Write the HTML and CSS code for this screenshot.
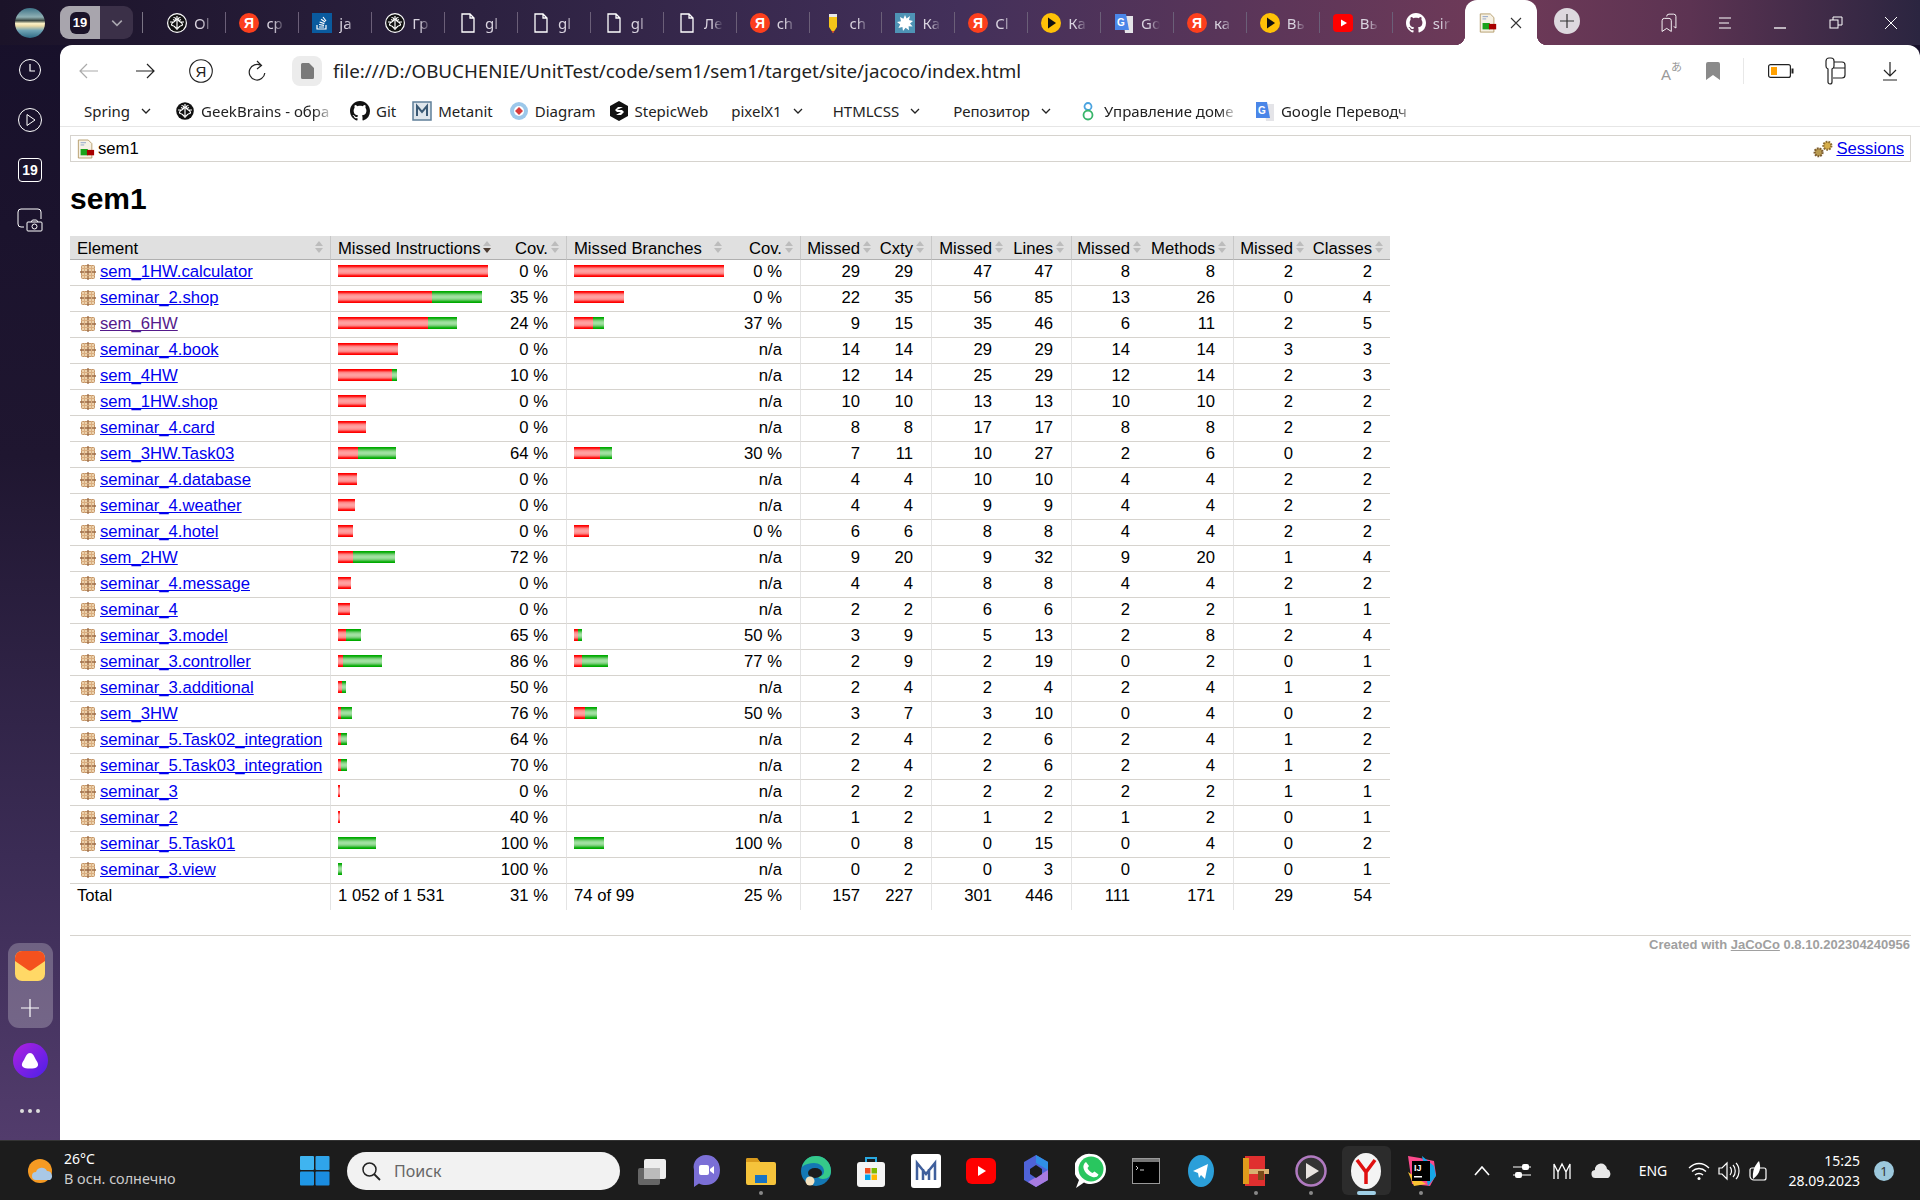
FILE: index.html
```html
<!DOCTYPE html>
<html lang="en">
<head>
  <meta charset="UTF-8" />
  <title>sem1</title>
  <link rel="stylesheet" href="styles.css">
</head>
<body>

  <!-- shared icons -->
  <svg class="defs" width="0" height="0">
    <symbol id="i-brain" viewBox="0 0 20 20">
      <circle cx="10" cy="10" r="10" fill="#fff"/>
      <circle cx="10" cy="10" r="8.8" fill="#111"/>
      <path d="M10 3v14M6.500 4.500c3 0 3 3 1 4s-3 1.500-3 3 2 1 3 2 1 2 2.500 2M13.500 4.500c-3 0-3 3-1 4s3 1.500 3 3-2 1-3 2-1 2-2.500 2M3 9h3.500M13.500 9H17M6 6.500l2 1M14 6.500l-2 1" fill="none" stroke="#fff" stroke-width="1.200"/>
    </symbol>
    <symbol id="i-ya" viewBox="0 0 20 20">
      <circle cx="10" cy="10" r="10" fill="#fc3f1d"/>
      <text x="10" y="15" text-anchor="middle" font-family="Liberation Sans" font-size="14" font-weight="bold" fill="#fff">Я</text>
    </symbol>
    <symbol id="i-so" viewBox="0 0 20 20">
      <rect width="20" height="20" fill="#0a5a9e"/>
      <path d="M5 12v4h9v-4M7 14h5M7 11.500l5 .8M7.600 9l4.800 1.600M9 6.300l4.200 2.800M11 4l3 4" fill="none" stroke="#fff" stroke-width="1.200"/>
    </symbol>
    <symbol id="i-doc" viewBox="0 0 20 20">
      <path d="M4 1h8l4 4v14H4z M12 1v4h4" fill="none" stroke="#fff" stroke-width="1.300"/>
    </symbol>
    <symbol id="i-pencil" viewBox="0 0 20 20">
      <path d="M6 4h8v10l-4 6-4-6z" fill="#f5c518"/>
      <path d="M6 1h8v3H6z" fill="#e8e8e8"/>
      <path d="M8.700 18h2.600L10 20z" fill="#d33"/>
    </symbol>
    <symbol id="i-splat" viewBox="0 0 20 20">
      <rect width="20" height="20" fill="#4e93b5"/>
      <path d="M10 2l1.600 3.400L15 3l-1 4 4 1-3 2.600 2.600 3-4-.4.4 4-3.400-2.400L8 18l-.6-4-4 1 1.800-3.600L2 9l4-.8L5 4l3.400 1.800z" fill="#fff"/>
    </symbol>
    <symbol id="i-kino" viewBox="0 0 20 20">
      <circle cx="10" cy="10" r="10" fill="#ffc107"/>
      <path d="M7 4.500l8 5.500-8 5.500z" fill="#111"/>
    </symbol>
    <symbol id="i-tr" viewBox="0 0 20 20">
      <path d="M9 3h10v17H11z" fill="#e4e4e8"/>
      <path d="M1 1h11l3 16H1z" fill="#4a86e8"/>
      <text x="7" y="13" text-anchor="middle" font-family="Liberation Sans" font-size="10" font-weight="bold" fill="#fff">G</text>
    </symbol>
    <symbol id="i-yt" viewBox="0 0 20 20">
      <rect y="1" width="20" height="18" rx="4" fill="#f00"/>
      <path d="M8 6.500l6 3.500-6 3.500z" fill="#fff"/>
    </symbol>
    <symbol id="i-gh" viewBox="0 0 16 16">
      <path fill="currentColor" d="M8 0C3.58 0 0 3.58 0 8c0 3.54 2.29 6.53 5.47 7.59.4.07.55-.17.55-.38 0-.19-.01-.82-.01-1.49-2.01.37-2.53-.49-2.69-.94-.09-.23-.48-.94-.82-1.13-.28-.15-.68-.52-.01-.53.63-.01 1.08.58 1.23.82.72 1.21 1.87.87 2.33.66.07-.52.28-.87.51-1.07-1.78-.2-3.64-.89-3.64-3.95 0-.87.31-1.59.82-2.15-.08-.2-.36-1.02.08-2.12 0 0 .67-.21 2.2.82.64-.18 1.32-.27 2-.27.68 0 1.36.09 2 .27 1.53-1.04 2.2-.82 2.2-.82.44 1.1.16 1.92.08 2.12.51.56.82 1.27.82 2.15 0 3.07-1.87 3.75-3.65 3.95.29.25.54.73.54 1.48 0 1.07-.01 1.93-.01 2.2 0 .21.15.46.55.38A8.013 8.013 0 0016 8c0-4.42-3.58-8-8-8z"/>
    </symbol>
    <symbol id="i-report" viewBox="0 0 20 22">
      <path d="M1.500 1h11l4 4v16h-15z" fill="#f6f1e4" stroke="#b39a68"/>
      <path d="M4 4h6M4 6.500h4" stroke="#8aa0c8"/>
      <rect x="4" y="11" width="8" height="7" fill="#1aa31a"/>
      <rect x="11" y="12" width="8" height="6" fill="#a80000"/>
    </symbol>
    <symbol id="i-pkg" viewBox="0 0 16 16">
      <rect x="1.500" y="1.500" width="13" height="13" rx="1" fill="#edd2ac" stroke="#c39568"/>
      <path d="M8 0v16M0 8h16" stroke="#9c6b45" stroke-width="1.300"/>
      <path d="M4.500 1v14M11.500 1v14M1 4.500h14M1 11.500h14" stroke="#d9ad80"/>
    </symbol>
    <symbol id="i-chev" viewBox="0 0 10 6">
      <path d="M1 1l4 4 4-4" fill="none" stroke="currentColor" stroke-width="1.300"/>
    </symbol>
  </svg>

  <div class="window">
    <div class="desk">

      <aside class="side">
        <div class="avatar"></div>
        <svg class="side-ic" width="24" height="24" viewBox="0 0 24 24"><circle cx="12" cy="12" r="10.500" fill="none" stroke="#fff"/><path d="M12 6v7h5" fill="none" stroke="#fff" stroke-width="1.200"/></svg>
        <svg class="side-ic" width="24" height="24" viewBox="0 0 24 24"><circle cx="12" cy="12" r="11.500" fill="none" stroke="#fff"/><path d="M9 6.500l8 5.500-8 5.500z" fill="none" stroke="#fff"/></svg>
        <div class="side-num">19</div>
        <svg class="side-ic shot" width="26" height="24" viewBox="0 0 26 24"><path d="M7 19H4a3 3 0 0 1-3-3V4a3 3 0 0 1 3-3h17a3 3 0 0 1 3 3v7" fill="none" stroke="#fff"/><rect x="10" y="14" width="15" height="9" rx="1" fill="none" stroke="#fff"/><circle cx="17.500" cy="18.500" r="2.500" fill="none" stroke="#fff"/><path d="M14 14l1.500-2h4l1.500 2" fill="none" stroke="#fff"/></svg>
        <div class="side-fill"></div>
        <div class="side-panel">
          <svg width="30" height="30" viewBox="0 0 30 30">
            <rect width="30" height="30" rx="7" fill="#ffd866"/>
            <path d="M0 7a7 7 0 0 1 7-7h16a7 7 0 0 1 7 7v3L17 19a3.500 3.500 0 0 1-4 0L0 10z" fill="#f4511e"/>
          </svg>
          <svg class="panel-plus" width="20" height="20" viewBox="0 0 20 20"><path d="M10 1v18M1 10h18" stroke="#fff" stroke-width="1.200"/></svg>
        </div>
        <div class="alice"><svg width="20" height="18" viewBox="0 0 20 18"><path d="M10 1c3 0 4 3 6 7 2 3 3 5 1 7-2 2-12 2-14 0-2-2-1-4 1-7 2-4 3-7 6-7z" fill="#fff"/></svg></div>
        <div class="side-dots"><i></i><i></i><i></i></div>
      </aside>

      <div class="browser">
        <div class="tabbar">
          <div class="tab-group">
            <div class="group-num"><span>19</span></div>
            <div class="group-arrow"><svg width="12" height="8"><use href="#i-chev"/></svg></div>
          </div>
          <div class="tab-sep"></div>
          <div class="tab first"><svg class="fav"><use href="#i-brain"/></svg><span class="tab-label">Ol</span></div>
          <div class="tab"><svg class="fav"><use href="#i-ya"/></svg><span class="tab-label">cp</span></div>
          <div class="tab"><svg class="fav"><use href="#i-so"/></svg><span class="tab-label">ja</span></div>
          <div class="tab"><svg class="fav"><use href="#i-brain"/></svg><span class="tab-label">Гр</span></div>
          <div class="tab"><svg class="fav"><use href="#i-doc"/></svg><span class="tab-label">gl</span></div>
          <div class="tab"><svg class="fav"><use href="#i-doc"/></svg><span class="tab-label">gl</span></div>
          <div class="tab"><svg class="fav"><use href="#i-doc"/></svg><span class="tab-label">gl</span></div>
          <div class="tab"><svg class="fav"><use href="#i-doc"/></svg><span class="tab-label">Ле</span></div>
          <div class="tab"><svg class="fav"><use href="#i-ya"/></svg><span class="tab-label">ch</span></div>
          <div class="tab"><svg class="fav"><use href="#i-pencil"/></svg><span class="tab-label">ch</span></div>
          <div class="tab"><svg class="fav"><use href="#i-splat"/></svg><span class="tab-label">Ка</span></div>
          <div class="tab"><svg class="fav"><use href="#i-ya"/></svg><span class="tab-label">Cl</span></div>
          <div class="tab"><svg class="fav"><use href="#i-kino"/></svg><span class="tab-label">Ка</span></div>
          <div class="tab"><svg class="fav"><use href="#i-tr"/></svg><span class="tab-label">Go</span></div>
          <div class="tab"><svg class="fav"><use href="#i-ya"/></svg><span class="tab-label">ка</span></div>
          <div class="tab"><svg class="fav"><use href="#i-kino"/></svg><span class="tab-label">Вь</span></div>
          <div class="tab"><svg class="fav"><use href="#i-yt"/></svg><span class="tab-label">Вь</span></div>
          <div class="tab"><svg class="fav gh-white"><use href="#i-gh"/></svg><span class="tab-label">sir</span></div>
          <div class="tab active">
            <svg class="fav"><use href="#i-report"/></svg>
            <svg class="tab-close" width="12" height="12" viewBox="0 0 12 12"><path d="M1 1l10 10M11 1L1 11" stroke="#333" stroke-width="1.100"/></svg>
          </div>
          <div class="new-tab"><svg width="14" height="14" viewBox="0 0 14 14"><path d="M7 0v14M0 7h14" stroke="#333" stroke-width="1.200"/></svg></div>
          <div class="win-btns">
            <svg width="18" height="20" viewBox="0 0 22 26"><path d="M8 4.500a3 3 0 0 1 3-3h6a3 3 0 0 1 3 3v15l-3-2M2 10a3 3 0 0 1 3-3h6a3 3 0 0 1 3 3v14l-6-4-6 4z" fill="none" stroke="#fff" stroke-width="1.200"/></svg>
            <svg width="14" height="12" viewBox="0 0 14 12"><path d="M1 1h12M1 6h10M1 11h12" stroke="#fff"/></svg>
            <svg width="14" height="12" viewBox="0 0 14 12"><path d="M1 11h12" stroke="#fff" stroke-width="1.300"/></svg>
            <svg width="14" height="13" viewBox="0 0 14 13"><rect x="1" y="4" width="8" height="8" fill="none" stroke="#fff"/><path d="M4 4V1h9v8H9" fill="none" stroke="#fff"/></svg>
            <svg width="14" height="12" viewBox="0 0 14 12"><path d="M1 0l12 12M13 0L1 12" stroke="#fff"/></svg>
          </div>
        </div>

        <div class="page">
          <div class="toolbar">
            <div class="tb-btn"><svg width="20" height="16" viewBox="0 0 20 16"><path d="M19 8H1M8 1L1 8l7 7" fill="none" stroke="#aaa" stroke-width="1.200"/></svg></div>
            <div class="tb-btn"><svg width="20" height="16" viewBox="0 0 20 16"><path d="M1 8h18M12 1l7 7-7 7" fill="none" stroke="#222" stroke-width="1.200"/></svg></div>
            <div class="tb-btn"><svg width="24" height="24" viewBox="0 0 24 24"><circle cx="12" cy="12" r="11.300" fill="none" stroke="#222" stroke-width="1.100"/><text x="12" y="17.500" text-anchor="middle" font-family="Liberation Sans" font-size="15" fill="#222">Я</text></svg></div>
            <div class="tb-btn"><svg width="18" height="22" viewBox="0 0 18 22"><path d="M13 5.500A7.800 7.800 0 1 0 16.800 13M9 1l4.500 4.500L9 9" fill="none" stroke="#222" stroke-width="1.200"/></svg></div>
            <div class="url-ic"><svg width="13" height="16" viewBox="0 0 13 16"><path d="M0 1.500A1.500 1.500 0 0 1 1.500 0H8l5 5v9.500a1.500 1.500 0 0 1-1.500 1.500h-10A1.500 1.500 0 0 1 0 14.500z" fill="#7a7a7a"/></svg></div>
            <div class="url">file:///D:/OBUCHENIE/UnitTest/code/sem1/sem1/target/site/jacoco/index.html</div>
            <div class="tb-right">
              <svg width="24" height="24" viewBox="0 0 24 24"><text x="1" y="21" font-family="Liberation Sans" font-size="15" fill="#999">A</text><text x="11" y="12" font-family="Noto Sans CJK JP" font-size="11" fill="#999">あ</text></svg>
              <svg class="tb-mark" width="14" height="18" viewBox="0 0 14 18"><path d="M0 2a2 2 0 0 1 2-2h10a2 2 0 0 1 2 2v16l-7-5-7 5z" fill="#8a8a8a"/></svg>
              <div class="tb-sep"></div>
              <svg class="tb-batt" width="26" height="14" viewBox="0 0 26 14"><rect x=".6" y=".6" width="21.800" height="12.800" rx="2" fill="none" stroke="#222" stroke-width="1.200"/><rect x="3" y="3" width="6" height="8" fill="#ffa000"/><rect x="23.500" y="4.500" width="2" height="5" fill="#222"/></svg>
              <svg class="tb-card" width="24" height="28" viewBox="0 0 24 28"><path d="M7 1h2a3 3 0 0 1 3 3v5a3 3 0 0 1-2 3v13a2 2 0 0 1-4 0V12a3 3 0 0 1-2-3V4a3 3 0 0 1 3-3zM12 5h8a3 3 0 0 1 3 3v10a3 3 0 0 1-3 3h-9M12 11h11" fill="none" stroke="#222" stroke-width="1.200"/></svg>
              <svg class="tb-down" width="16" height="20" viewBox="0 0 16 20"><path d="M8 1v14M2 9l6 6 6-6M1 19h14" fill="none" stroke="#222" stroke-width="1.200"/></svg>
            </div>
          </div>

          <div class="bookmarks">
            <div class="bm folder first">Spring <svg class="chev"><use href="#i-chev"/></svg></div>
            <div class="bm gb"><svg class="fav"><use href="#i-brain"/></svg><span class="clip w-gb">GeekBrains - обра</span></div>
            <div class="bm"><svg class="fav gh-dark"><use href="#i-gh"/></svg>Git</div>
            <div class="bm"><svg class="fav" viewBox="0 0 20 20"><rect x="1" y="1" width="18" height="18" fill="#dfe6ec" stroke="#5f7f99" stroke-width="1.500"/><path d="M5 15V5l5 6 5-6v10" fill="none" stroke="#3b5a75" stroke-width="2"/></svg>Metanit</div>
            <div class="bm"><svg class="fav" viewBox="0 0 20 20"><circle cx="10" cy="10" r="9" fill="#9cc8ea"/><circle cx="10" cy="10" r="5" fill="#fff"/><path d="M10 6l4 4-4 4-4-4z" fill="#d83a3a"/></svg>Diagram</div>
            <div class="bm stepic"><svg class="fav" viewBox="0 0 20 20"><path d="M10 0l9 5v10l-9 5-9-5V5z" fill="#111"/><path d="M14 6H9L6 9l2 2h4l-5 3h5l3-3-2-2H8z" fill="#fff"/></svg>StepicWeb</div>
            <div class="bm folder pixel">pixelX1 <svg class="chev"><use href="#i-chev"/></svg></div>
            <div class="bm folder wide">HTMLCSS <svg class="chev"><use href="#i-chev"/></svg></div>
            <div class="bm folder repo">Репозитор <svg class="chev"><use href="#i-chev"/></svg></div>
            <div class="bm dom"><svg class="fav" viewBox="0 0 20 20"><circle cx="10" cy="5.500" r="3.500" fill="none" stroke="#4aa3e0" stroke-width="1.800"/><circle cx="10" cy="14" r="4.500" fill="none" stroke="#38b56a" stroke-width="1.800"/></svg><span class="clip w-dom">Управление доме</span></div>
            <div class="bm"><svg class="fav"><use href="#i-tr"/></svg><span class="clip w-tr">Google Переводч</span></div>
          </div>

          <main class="content">
            <div class="breadcrumb">
              <span class="crumb-left"><svg class="crumb-ic"><use href="#i-report"/></svg>sem1</span>
              <span class="crumb-right">
                <svg class="crumb-gears" width="22" height="20" viewBox="0 0 20 18">
                  <circle cx="6" cy="12" r="3.600" fill="#b89a50" stroke="#7a5a30" stroke-width="2" stroke-dasharray="1.500 1"/>
                  <circle cx="14" cy="6" r="3.600" fill="#d6ae4a" stroke="#8a6a30" stroke-width="2" stroke-dasharray="1.500 1"/>
                </svg><a href="#">Sessions</a>
              </span>
            </div>

            <h1>sem1</h1>

            <table class="coverage">
              <colgroup>
                <col class="c-el"><col class="c-bar"><col class="c-cov"><col class="c-bar2"><col class="c-cov2">
                <col class="c-m1"><col class="c-t1"><col class="c-m2"><col class="c-t2"><col class="c-m3"><col class="c-t3"><col class="c-m4"><col class="c-t4">
              </colgroup>
              <thead>
                <tr>
                  <td class="sort el">Element</td>
                  <td class="sort down bar">Missed Instructions</td>
                  <td class="sort ctr2">Cov.</td>
                  <td class="sort bar">Missed Branches</td>
                  <td class="sort ctr2">Cov.</td>
                  <td class="sort ctr1 gl">Missed</td>
                  <td class="sort ctr2">Cxty</td>
                  <td class="sort ctr1 gl">Missed</td>
                  <td class="sort ctr2">Lines</td>
                  <td class="sort ctr1 gl">Missed</td>
                  <td class="sort ctr2">Methods</td>
                  <td class="sort ctr1 gl">Missed</td>
                  <td class="sort ctr2">Classes</td>
                </tr>
              </thead>
              <tbody>
                <tr><td class="pkg"><svg class="pkg-ic"><use href="#i-pkg"/></svg><a href="#">sem_1HW.calculator</a></td><td class="bar"><div class="bars"><i class="r" style="width:150px"></i></div></td><td class="ctr2">0 %</td><td class="bar"><div class="bars"><i class="r" style="width:150px"></i></div></td><td class="ctr2">0 %</td><td class="ctr1 gl">29</td><td class="ctr2">29</td><td class="ctr1 gl">47</td><td class="ctr2">47</td><td class="ctr1 gl">8</td><td class="ctr2">8</td><td class="ctr1 gl">2</td><td class="ctr2">2</td></tr>
                <tr><td class="pkg"><svg class="pkg-ic"><use href="#i-pkg"/></svg><a href="#">seminar_2.shop</a></td><td class="bar"><div class="bars"><i class="r" style="width:94px"></i><i class="g" style="width:50px"></i></div></td><td class="ctr2">35 %</td><td class="bar"><div class="bars"><i class="r" style="width:50px"></i></div></td><td class="ctr2">0 %</td><td class="ctr1 gl">22</td><td class="ctr2">35</td><td class="ctr1 gl">56</td><td class="ctr2">85</td><td class="ctr1 gl">13</td><td class="ctr2">26</td><td class="ctr1 gl">0</td><td class="ctr2">4</td></tr>
                <tr><td class="pkg"><svg class="pkg-ic"><use href="#i-pkg"/></svg><a href="#" class="visited">sem_6HW</a></td><td class="bar"><div class="bars"><i class="r" style="width:90px"></i><i class="g" style="width:29px"></i></div></td><td class="ctr2">24 %</td><td class="bar"><div class="bars"><i class="r" style="width:19px"></i><i class="g" style="width:11px"></i></div></td><td class="ctr2">37 %</td><td class="ctr1 gl">9</td><td class="ctr2">15</td><td class="ctr1 gl">35</td><td class="ctr2">46</td><td class="ctr1 gl">6</td><td class="ctr2">11</td><td class="ctr1 gl">2</td><td class="ctr2">5</td></tr>
                <tr><td class="pkg"><svg class="pkg-ic"><use href="#i-pkg"/></svg><a href="#">seminar_4.book</a></td><td class="bar"><div class="bars"><i class="r" style="width:60px"></i></div></td><td class="ctr2">0 %</td><td class="bar"></td><td class="ctr2">n/a</td><td class="ctr1 gl">14</td><td class="ctr2">14</td><td class="ctr1 gl">29</td><td class="ctr2">29</td><td class="ctr1 gl">14</td><td class="ctr2">14</td><td class="ctr1 gl">3</td><td class="ctr2">3</td></tr>
                <tr><td class="pkg"><svg class="pkg-ic"><use href="#i-pkg"/></svg><a href="#">sem_4HW</a></td><td class="bar"><div class="bars"><i class="r" style="width:54px"></i><i class="g" style="width:5px"></i></div></td><td class="ctr2">10 %</td><td class="bar"></td><td class="ctr2">n/a</td><td class="ctr1 gl">12</td><td class="ctr2">14</td><td class="ctr1 gl">25</td><td class="ctr2">29</td><td class="ctr1 gl">12</td><td class="ctr2">14</td><td class="ctr1 gl">2</td><td class="ctr2">3</td></tr>
                <tr><td class="pkg"><svg class="pkg-ic"><use href="#i-pkg"/></svg><a href="#">sem_1HW.shop</a></td><td class="bar"><div class="bars"><i class="r" style="width:28px"></i></div></td><td class="ctr2">0 %</td><td class="bar"></td><td class="ctr2">n/a</td><td class="ctr1 gl">10</td><td class="ctr2">10</td><td class="ctr1 gl">13</td><td class="ctr2">13</td><td class="ctr1 gl">10</td><td class="ctr2">10</td><td class="ctr1 gl">2</td><td class="ctr2">2</td></tr>
                <tr><td class="pkg"><svg class="pkg-ic"><use href="#i-pkg"/></svg><a href="#">seminar_4.card</a></td><td class="bar"><div class="bars"><i class="r" style="width:28px"></i></div></td><td class="ctr2">0 %</td><td class="bar"></td><td class="ctr2">n/a</td><td class="ctr1 gl">8</td><td class="ctr2">8</td><td class="ctr1 gl">17</td><td class="ctr2">17</td><td class="ctr1 gl">8</td><td class="ctr2">8</td><td class="ctr1 gl">2</td><td class="ctr2">2</td></tr>
                <tr><td class="pkg"><svg class="pkg-ic"><use href="#i-pkg"/></svg><a href="#">sem_3HW.Task03</a></td><td class="bar"><div class="bars"><i class="r" style="width:20px"></i><i class="g" style="width:38px"></i></div></td><td class="ctr2">64 %</td><td class="bar"><div class="bars"><i class="r" style="width:26px"></i><i class="g" style="width:12px"></i></div></td><td class="ctr2">30 %</td><td class="ctr1 gl">7</td><td class="ctr2">11</td><td class="ctr1 gl">10</td><td class="ctr2">27</td><td class="ctr1 gl">2</td><td class="ctr2">6</td><td class="ctr1 gl">0</td><td class="ctr2">2</td></tr>
                <tr><td class="pkg"><svg class="pkg-ic"><use href="#i-pkg"/></svg><a href="#">seminar_4.database</a></td><td class="bar"><div class="bars"><i class="r" style="width:19px"></i></div></td><td class="ctr2">0 %</td><td class="bar"></td><td class="ctr2">n/a</td><td class="ctr1 gl">4</td><td class="ctr2">4</td><td class="ctr1 gl">10</td><td class="ctr2">10</td><td class="ctr1 gl">4</td><td class="ctr2">4</td><td class="ctr1 gl">2</td><td class="ctr2">2</td></tr>
                <tr><td class="pkg"><svg class="pkg-ic"><use href="#i-pkg"/></svg><a href="#">seminar_4.weather</a></td><td class="bar"><div class="bars"><i class="r" style="width:17px"></i></div></td><td class="ctr2">0 %</td><td class="bar"></td><td class="ctr2">n/a</td><td class="ctr1 gl">4</td><td class="ctr2">4</td><td class="ctr1 gl">9</td><td class="ctr2">9</td><td class="ctr1 gl">4</td><td class="ctr2">4</td><td class="ctr1 gl">2</td><td class="ctr2">2</td></tr>
                <tr><td class="pkg"><svg class="pkg-ic"><use href="#i-pkg"/></svg><a href="#">seminar_4.hotel</a></td><td class="bar"><div class="bars"><i class="r" style="width:15px"></i></div></td><td class="ctr2">0 %</td><td class="bar"><div class="bars"><i class="r" style="width:15px"></i></div></td><td class="ctr2">0 %</td><td class="ctr1 gl">6</td><td class="ctr2">6</td><td class="ctr1 gl">8</td><td class="ctr2">8</td><td class="ctr1 gl">4</td><td class="ctr2">4</td><td class="ctr1 gl">2</td><td class="ctr2">2</td></tr>
                <tr><td class="pkg"><svg class="pkg-ic"><use href="#i-pkg"/></svg><a href="#">sem_2HW</a></td><td class="bar"><div class="bars"><i class="r" style="width:15px"></i><i class="g" style="width:42px"></i></div></td><td class="ctr2">72 %</td><td class="bar"></td><td class="ctr2">n/a</td><td class="ctr1 gl">9</td><td class="ctr2">20</td><td class="ctr1 gl">9</td><td class="ctr2">32</td><td class="ctr1 gl">9</td><td class="ctr2">20</td><td class="ctr1 gl">1</td><td class="ctr2">4</td></tr>
                <tr><td class="pkg"><svg class="pkg-ic"><use href="#i-pkg"/></svg><a href="#">seminar_4.message</a></td><td class="bar"><div class="bars"><i class="r" style="width:13px"></i></div></td><td class="ctr2">0 %</td><td class="bar"></td><td class="ctr2">n/a</td><td class="ctr1 gl">4</td><td class="ctr2">4</td><td class="ctr1 gl">8</td><td class="ctr2">8</td><td class="ctr1 gl">4</td><td class="ctr2">4</td><td class="ctr1 gl">2</td><td class="ctr2">2</td></tr>
                <tr><td class="pkg"><svg class="pkg-ic"><use href="#i-pkg"/></svg><a href="#">seminar_4</a></td><td class="bar"><div class="bars"><i class="r" style="width:12px"></i></div></td><td class="ctr2">0 %</td><td class="bar"></td><td class="ctr2">n/a</td><td class="ctr1 gl">2</td><td class="ctr2">2</td><td class="ctr1 gl">6</td><td class="ctr2">6</td><td class="ctr1 gl">2</td><td class="ctr2">2</td><td class="ctr1 gl">1</td><td class="ctr2">1</td></tr>
                <tr><td class="pkg"><svg class="pkg-ic"><use href="#i-pkg"/></svg><a href="#">seminar_3.model</a></td><td class="bar"><div class="bars"><i class="r" style="width:8px"></i><i class="g" style="width:15px"></i></div></td><td class="ctr2">65 %</td><td class="bar"><div class="bars"><i class="r" style="width:4px"></i><i class="g" style="width:4px"></i></div></td><td class="ctr2">50 %</td><td class="ctr1 gl">3</td><td class="ctr2">9</td><td class="ctr1 gl">5</td><td class="ctr2">13</td><td class="ctr1 gl">2</td><td class="ctr2">8</td><td class="ctr1 gl">2</td><td class="ctr2">4</td></tr>
                <tr><td class="pkg"><svg class="pkg-ic"><use href="#i-pkg"/></svg><a href="#">seminar_3.controller</a></td><td class="bar"><div class="bars"><i class="r" style="width:5px"></i><i class="g" style="width:39px"></i></div></td><td class="ctr2">86 %</td><td class="bar"><div class="bars"><i class="r" style="width:8px"></i><i class="g" style="width:26px"></i></div></td><td class="ctr2">77 %</td><td class="ctr1 gl">2</td><td class="ctr2">9</td><td class="ctr1 gl">2</td><td class="ctr2">19</td><td class="ctr1 gl">0</td><td class="ctr2">2</td><td class="ctr1 gl">0</td><td class="ctr2">1</td></tr>
                <tr><td class="pkg"><svg class="pkg-ic"><use href="#i-pkg"/></svg><a href="#">seminar_3.additional</a></td><td class="bar"><div class="bars"><i class="r" style="width:4px"></i><i class="g" style="width:4px"></i></div></td><td class="ctr2">50 %</td><td class="bar"></td><td class="ctr2">n/a</td><td class="ctr1 gl">2</td><td class="ctr2">4</td><td class="ctr1 gl">2</td><td class="ctr2">4</td><td class="ctr1 gl">2</td><td class="ctr2">4</td><td class="ctr1 gl">1</td><td class="ctr2">2</td></tr>
                <tr><td class="pkg"><svg class="pkg-ic"><use href="#i-pkg"/></svg><a href="#">sem_3HW</a></td><td class="bar"><div class="bars"><i class="r" style="width:3px"></i><i class="g" style="width:11px"></i></div></td><td class="ctr2">76 %</td><td class="bar"><div class="bars"><i class="r" style="width:11px"></i><i class="g" style="width:12px"></i></div></td><td class="ctr2">50 %</td><td class="ctr1 gl">3</td><td class="ctr2">7</td><td class="ctr1 gl">3</td><td class="ctr2">10</td><td class="ctr1 gl">0</td><td class="ctr2">4</td><td class="ctr1 gl">0</td><td class="ctr2">2</td></tr>
                <tr><td class="pkg"><svg class="pkg-ic"><use href="#i-pkg"/></svg><a href="#">seminar_5.Task02_integration</a></td><td class="bar"><div class="bars"><i class="r" style="width:3px"></i><i class="g" style="width:6px"></i></div></td><td class="ctr2">64 %</td><td class="bar"></td><td class="ctr2">n/a</td><td class="ctr1 gl">2</td><td class="ctr2">4</td><td class="ctr1 gl">2</td><td class="ctr2">6</td><td class="ctr1 gl">2</td><td class="ctr2">4</td><td class="ctr1 gl">1</td><td class="ctr2">2</td></tr>
                <tr><td class="pkg"><svg class="pkg-ic"><use href="#i-pkg"/></svg><a href="#">seminar_5.Task03_integration</a></td><td class="bar"><div class="bars"><i class="r" style="width:3px"></i><i class="g" style="width:6px"></i></div></td><td class="ctr2">70 %</td><td class="bar"></td><td class="ctr2">n/a</td><td class="ctr1 gl">2</td><td class="ctr2">4</td><td class="ctr1 gl">2</td><td class="ctr2">6</td><td class="ctr1 gl">2</td><td class="ctr2">4</td><td class="ctr1 gl">1</td><td class="ctr2">2</td></tr>
                <tr><td class="pkg"><svg class="pkg-ic"><use href="#i-pkg"/></svg><a href="#">seminar_3</a></td><td class="bar"><div class="bars"><i class="r" style="width:2px"></i></div></td><td class="ctr2">0 %</td><td class="bar"></td><td class="ctr2">n/a</td><td class="ctr1 gl">2</td><td class="ctr2">2</td><td class="ctr1 gl">2</td><td class="ctr2">2</td><td class="ctr1 gl">2</td><td class="ctr2">2</td><td class="ctr1 gl">1</td><td class="ctr2">1</td></tr>
                <tr><td class="pkg"><svg class="pkg-ic"><use href="#i-pkg"/></svg><a href="#">seminar_2</a></td><td class="bar"><div class="bars"><i class="r" style="width:2px"></i></div></td><td class="ctr2">40 %</td><td class="bar"></td><td class="ctr2">n/a</td><td class="ctr1 gl">1</td><td class="ctr2">2</td><td class="ctr1 gl">1</td><td class="ctr2">2</td><td class="ctr1 gl">1</td><td class="ctr2">2</td><td class="ctr1 gl">0</td><td class="ctr2">1</td></tr>
                <tr><td class="pkg"><svg class="pkg-ic"><use href="#i-pkg"/></svg><a href="#">seminar_5.Task01</a></td><td class="bar"><div class="bars"><i class="g" style="width:38px"></i></div></td><td class="ctr2">100 %</td><td class="bar"><div class="bars"><i class="g" style="width:30px"></i></div></td><td class="ctr2">100 %</td><td class="ctr1 gl">0</td><td class="ctr2">8</td><td class="ctr1 gl">0</td><td class="ctr2">15</td><td class="ctr1 gl">0</td><td class="ctr2">4</td><td class="ctr1 gl">0</td><td class="ctr2">2</td></tr>
                <tr><td class="pkg"><svg class="pkg-ic"><use href="#i-pkg"/></svg><a href="#">seminar_3.view</a></td><td class="bar"><div class="bars"><i class="g" style="width:4px"></i></div></td><td class="ctr2">100 %</td><td class="bar"></td><td class="ctr2">n/a</td><td class="ctr1 gl">0</td><td class="ctr2">2</td><td class="ctr1 gl">0</td><td class="ctr2">3</td><td class="ctr1 gl">0</td><td class="ctr2">2</td><td class="ctr1 gl">0</td><td class="ctr2">1</td></tr>
              </tbody>
              <tfoot>
                <tr>
                  <td class="el">Total</td>
                  <td class="bar">1 052 of 1 531</td>
                  <td class="ctr2">31 %</td>
                  <td class="bar">74 of 99</td>
                  <td class="ctr2">25 %</td>
                  <td class="ctr1 gl">157</td><td class="ctr2">227</td>
                  <td class="ctr1 gl">301</td><td class="ctr2">446</td>
                  <td class="ctr1 gl">111</td><td class="ctr2">171</td>
                  <td class="ctr1 gl">29</td><td class="ctr2">54</td>
                </tr>
              </tfoot>
            </table>

            <div class="footer">Created with <a href="#">JaCoCo</a> 0.8.10.202304240956</div>
          </main>
        </div>
      </div>
    </div>

    <footer class="taskbar">
      <div class="weather">
        <svg width="30" height="30" viewBox="0 0 30 30"><circle cx="14" cy="15" r="12" fill="#f59a23"/><path d="M10 24a4 4 0 0 1 0-8 6 6 0 0 1 11-1 5 5 0 0 1 3 9z" fill="#a9c8e6"/></svg>
        <div class="weather-text"><div class="temp">26°C</div><div class="cond">В осн. солнечно</div></div>
      </div>
      <svg class="winlogo" width="30" height="30" viewBox="0 0 30 30"><rect width="14" height="14" rx="1" fill="#3fb4f0"/><rect x="15.500" width="14" height="14" rx="1" fill="#2fa4ea"/><rect y="15.500" width="14" height="14" rx="1" fill="#1f97e6"/><rect x="15.500" y="15.500" width="14" height="14" rx="1" fill="#1a8ce0"/></svg>
      <div class="search">
        <svg width="20" height="20" viewBox="0 0 20 20"><circle cx="8.500" cy="8.500" r="6.500" fill="none" stroke="#222" stroke-width="1.500"/><path d="M13 13l6 6" stroke="#222" stroke-width="1.800"/></svg>
        <span>Поиск</span>
      </div>
      <div class="apps">
        <div class="app"><svg width="30" height="30" viewBox="0 0 30 30"><rect x="2" y="12" width="22" height="17" rx="2" fill="#666"/><rect x="8" y="3" width="22" height="20" rx="2" fill="#eee"/><rect x="8" y="12" width="16" height="11" fill="#bbb"/></svg></div>
        <div class="app"><svg width="30" height="34" viewBox="0 0 30 34"><path d="M15 1c8 0 14 6 14 15s-6 15-14 15c-3 0-5-.5-7-1.500L3 33V16C1 8 7 1 15 1z" fill="#7b6fd6"/><rect x="8" y="11" width="10" height="10" rx="2" fill="#fff"/><path d="M19 15l4-3v8l-4-3z" fill="#fff"/></svg></div>
        <div class="app on"><svg width="30" height="28" viewBox="0 0 30 28"><path d="M0 3a2 2 0 0 1 2-2h9l3 4h14a2 2 0 0 1 2 2v19a2 2 0 0 1-2 2H2a2 2 0 0 1-2-2z" fill="#f5c33b"/><path d="M0 3a2 2 0 0 1 2-2h9l3 4H0z" fill="#d99a1c"/><rect x="9" y="18" width="12" height="8" fill="#1773c4"/></svg></div>
        <div class="app"><svg width="30" height="32" viewBox="0 0 30 32"><circle cx="15" cy="16" r="15" fill="#1478b4"/><path d="M1 12C3 4 9 1 15 1c8 0 15 6 15 15 0 5-3 8-8 8-3 0-5-1-5-3 2 0 6 0 6-5 0-5-5-8-10-8-4 0-9 1-12 4z" fill="#35c98a"/><ellipse cx="14" cy="18" rx="7" ry="5" fill="#1c1c1c"/><circle cx="9" cy="26" r="4.500" fill="#f3e2c0"/></svg></div>
        <div class="app"><svg width="28" height="32" viewBox="0 0 28 32"><path d="M9 8V3h10v5" fill="none" stroke="#29a8e0" stroke-width="2"/><rect y="7" width="28" height="25" rx="3" fill="#f4f4f4"/><rect x="8" y="13" width="5.500" height="5.500" fill="#f25022"/><rect x="14.500" y="13" width="5.500" height="5.500" fill="#7fba00"/><rect x="8" y="19.500" width="5.500" height="5.500" fill="#00a4ef"/><rect x="14.500" y="19.500" width="5.500" height="5.500" fill="#ffb900"/></svg></div>
        <div class="app"><svg width="30" height="34" viewBox="0 0 30 34"><rect width="30" height="34" rx="3" fill="#fff"/><path d="M6 26V9l9 11 9-11v17M12 26V15M18 26V15" fill="none" stroke="#3f5f9c" stroke-width="2.500"/></svg></div>
        <div class="app"><svg width="30" height="30" viewBox="0 0 30 30"><rect y="2" width="30" height="26" rx="6" fill="#f00"/><path d="M12 10l8 5-8 5z" fill="#fff"/></svg></div>
        <div class="app"><svg width="28" height="34" viewBox="0 0 28 34"><path d="M14 1l12 7v18l-12 7-12-7V8z" fill="#4f63d8"/><path d="M14 1l12 7v8L14 9z" fill="#2f8fe6"/><path d="M26 16v10l-12 7-8-5z" fill="#a87be0"/><path d="M14 11l6 4v5l-6 4-6-4v-5z" fill="#1c1c1c"/></svg></div>
        <div class="app"><svg width="32" height="36" viewBox="0 0 32 36"><path d="M16 1a15 15 0 0 1 0 30c-3 0-5-.5-7-1.500L1 35l3-8A15 15 0 0 1 16 1z" fill="#fff"/><circle cx="16" cy="16" r="12.500" fill="#29c65f"/><path d="M11 9l3 4-1.500 2c1 2.500 3 4 5 5l2-1.500 4 3c-1 3-4 3-6 2.500-5-1.500-8-5-9-9-.5-2 .5-5 2.500-6z" fill="#fff"/></svg></div>
        <div class="app"><svg width="28" height="26" viewBox="0 0 28 26"><rect x=".5" y=".5" width="27" height="25" fill="#000" stroke="#999"/><rect x="1" y="1" width="26" height="3" fill="#777"/><path d="M4 8l2 2-2 2M8 12h4" stroke="#ccc" fill="none"/></svg></div>
        <div class="app"><svg width="26" height="32" viewBox="0 0 26 32"><ellipse cx="13" cy="16" rx="13" ry="16" fill="#2b9fd9"/><path d="M5 16l15-7-3 15-4-4-2 3-1-5z" fill="#fff"/></svg></div>
        <div class="app on"><svg width="26" height="32" viewBox="0 0 26 32"><rect x="2" y="1" width="20" height="30" fill="#e02f2f"/><rect x="0" y="3" width="6" height="26" fill="#e09b1c"/><rect x="6" y="14" width="20" height="5" fill="#d8b070"/><rect x="15" y="16" width="6" height="9" fill="#7a4a1a"/></svg></div>
        <div class="app on"><svg width="32" height="32" viewBox="0 0 32 32"><circle cx="16" cy="16" r="14.500" fill="#333" stroke="#b07ac0" stroke-width="2.500"/><path d="M11 8l13 8-13 8z" fill="#e8e4e0"/></svg></div>
        <div class="app current"><svg width="30" height="36" viewBox="0 0 30 36"><ellipse cx="15" cy="18" rx="15" ry="18" fill="#f4f4f4"/><path d="M6 7l9 12 9-12M15 19v12" fill="none" stroke="#e01010" stroke-width="3.500"/></svg></div>
        <div class="app on"><svg width="30" height="30" viewBox="0 0 30 30"><path d="M2 0l12 2 14 3 2 14-6 11-18-2z" fill="#fc4a8c"/><path d="M16 0l12 10 2 10-8 10z" fill="#17a6e6"/><path d="M2 16l6 14 12-2z" fill="#f9c233"/><rect x="6" y="5" width="18" height="20" fill="#000"/><text x="8" y="15" font-family="Liberation Sans" font-size="9" font-weight="bold" fill="#fff">IJ</text><rect x="8" y="20" width="8" height="1.500" fill="#fff"/></svg></div>
      </div>
      <div class="tray">
        <div class="tray-ic"><svg width="16" height="10" viewBox="0 0 16 10"><path d="M1 9l7-8 7 8" fill="none" stroke="#fff" stroke-width="1.600"/></svg></div>
        <div class="tray-ic"><svg width="18" height="18" viewBox="0 0 18 18"><path d="M0 5h18M0 13h18" stroke="#fff" stroke-width="1.200"/><rect x="9" y="2" width="7" height="6" rx="2" fill="#fff"/><rect x="2" y="10" width="7" height="6" rx="2" fill="#fff"/></svg></div>
        <div class="tray-ic"><svg width="18" height="18" viewBox="0 0 18 18"><path d="M1 17V2l4 8 4-8 4 8 4-8v15M5 10v7M13 10v7" fill="none" stroke="#fff" stroke-width="1.300"/></svg></div>
        <div class="tray-ic"><svg width="22" height="16" viewBox="0 0 22 16"><path d="M5 15a4 4 0 0 1-1-8 6 6 0 0 1 12-1 5 5 0 0 1 1 9z" fill="#e8e8e8"/></svg></div>
        <div class="tray-lang">ENG</div>
        <div class="tray-sm"><svg width="22" height="20" viewBox="0 0 22 20"><path d="M1 7c6-6 14-6 20 0M4 10.500c4-4 10-4 14 0M7 14c2-2 6-2 8 0" fill="none" stroke="#fff" stroke-width="1.300"/><circle cx="11" cy="17.500" r="1.500" fill="#fff"/></svg></div>
        <div class="tray-sm"><svg width="22" height="20" viewBox="0 0 22 20"><path d="M1 7h3l5-5v16l-5-5H1z" fill="none" stroke="#fff" stroke-width="1.200"/><path d="M12 6c2 2 2 6 0 8M15 4c3 3 3 9 0 12M18 2c4 4 4 12 0 16" fill="none" stroke="#fff" stroke-width="1.200"/></svg></div>
        <div class="tray-sm"><svg width="22" height="22" viewBox="0 0 22 22"><path d="M5 8h12a2 2 0 0 1 2 2v8a2 2 0 0 1-2 2H7a4 4 0 0 1-4-4v-6a2 2 0 0 1 2-2z" fill="none" stroke="#fff" stroke-width="1.200"/><path d="M6 19c-1-8 2-14 6-18 2 6 2 12-6 18z" fill="#fff"/></svg></div>
        <div class="clock"><div>15:25</div><div>28.09.2023</div></div>
        <div class="badge">1</div>
      </div>
    </footer>
  </div>

</body>
</html>
```

FILE: styles.css
```css
body {
  margin: 0;
  background-color: #1c1c1c;
  font-family: "Liberation Sans", Arial, sans-serif;
}

.defs {
  position: absolute;
}

.window {
  width: 1920px;
  height: 1200px;
  display: flex;
  flex-direction: column;
  overflow: hidden;
}

.desk {
  display: flex;
  height: 1140px;
  background: linear-gradient(180deg, #17102a 0%, #1f1630 40%, #3b2c55 75%, #523c6c 100%);
}

/* left rail */
.side {
  width: 60px;
  flex: none;
  display: flex;
  flex-direction: column;
  align-items: center;
  padding-top: 8px;
  box-sizing: border-box;
  position: relative;
  z-index: 1;
}

.avatar {
  width: 30px;
  height: 30px;
  border-radius: 50%;
  background: linear-gradient(180deg, #3e7388 0%, #8fb0b4 30%, #3d4a44 42%, #fff4c8 52%, #e9d9a6 60%, #6fa3b4 75%, #2e6a85 100%);
}

.side-ic {
  display: block;
  margin-top: 20px;
}

.side-ic + .side-ic {
  margin-top: 26px;
}

.side-num {
  width: 22px;
  height: 22px;
  margin-top: 26px;
  border: 1px solid #fff;
  border-radius: 4px;
  color: #fff;
  font-weight: bold;
  font-size: 14px;
  line-height: 22px;
  text-align: center;
}

.side-ic.shot {
  margin-top: 26px;
}

.side-fill {
  flex: 1;
}

.side-panel {
  width: 45px;
  height: 85px;
  box-sizing: border-box;
  padding-top: 8px;
  border-radius: 11px;
  background-color: rgba(255, 255, 255, 0.24);
  display: flex;
  flex-direction: column;
  align-items: center;
}

.panel-plus {
  margin-top: 17px;
}

.alice {
  width: 35px;
  height: 35px;
  margin-top: 15px;
  border-radius: 50%;
  background: linear-gradient(135deg, #b020e0, #4a20e8);
  display: flex;
  align-items: center;
  justify-content: center;
}

.side-dots {
  display: flex;
  gap: 4px;
  margin: 31px 0 27px;
}

.side-dots i {
  width: 4px;
  height: 4px;
  border-radius: 50%;
  background-color: #ddd;
}

/* browser */
.browser {
  flex: 1;
  display: flex;
  flex-direction: column;
  min-width: 0;
}

.tabbar {
  height: 45px;
  flex: none;
  display: flex;
  background: linear-gradient(90deg, #1b1329 0%, #2c2140 25%, #43305a 50%, #6f3a58 78%, #5c3352 88%, #2b2540 100%);
  margin-left: -60px;
  padding-left: 60px;
}

.tab-group {
  display: flex;
  width: 73px;
  height: 33px;
  margin-top: 6px;
  border-radius: 9px;
  overflow: hidden;
  background-color: #3b3048;
}

.group-num {
  width: 40px;
  background-color: #a8a5ad;
  display: flex;
  align-items: center;
  justify-content: center;
}

.group-num span {
  width: 20px;
  height: 22px;
  border-radius: 6px;
  background-color: #1a1228;
  color: #fff;
  font-size: 13px;
  font-weight: bold;
  line-height: 22px;
  text-align: center;
}

.group-arrow {
  flex: 1;
  color: #a8a5ad;
  display: flex;
  align-items: center;
  justify-content: center;
}

.tab-sep {
  width: 1px;
  height: 21px;
  margin: 12px 10px 0 9px;
  background-color: #7a7484;
}

.tab {
  width: 72.9px;
  flex: none;
  box-sizing: border-box;
  height: 45px;
  padding-left: 14px;
  display: flex;
  align-items: center;
  position: relative;
  color: #d8d2de;
}

.tab.first {
  width: 72.4px;
}

.tab::before {
  content: "";
  position: absolute;
  left: 0;
  top: 12px;
  height: 21px;
  width: 1px;
  background-color: #6b5f78;
}

.tab.first::before {
  display: none;
}

.fav {
  width: 20px;
  height: 20px;
  flex: none;
}

.gh-white {
  color: #fff;
}

.gh-dark {
  color: #111;
}

.tab-label {
  width: 19px;
  margin-left: 7px;
  overflow: hidden;
  white-space: nowrap;
  font-family: "Noto Sans", sans-serif;
  font-size: 15px;
  -webkit-mask-image: linear-gradient(90deg, #000 40%, transparent);
  mask-image: linear-gradient(90deg, #000 40%, transparent);
}

.tab.active {
  background-color: #fff;
  border-radius: 12px 12px 0 0;
  padding-left: 13px;
}

/* flared feet of the active tab */
.tab.active::before,
.tab.active::after {
  content: "";
  position: absolute;
  top: auto;
  bottom: 0;
  width: 10px;
  height: 10px;
}

.tab.active::before {
  left: -10px;
  background: radial-gradient(circle at 0 0, transparent 10px, #fff 10.5px);
}

.tab.active::after {
  right: -10px;
  background: radial-gradient(circle at 100% 0, transparent 10px, #fff 10.5px);
}

.tab-close {
  margin-left: 12px;
}

.new-tab {
  width: 26px;
  height: 26px;
  margin: 8px 0 0 17px;
  border-radius: 50%;
  background-color: #ddd8de;
  display: flex;
  align-items: center;
  justify-content: center;
}

.win-btns {
  margin-left: auto;
  padding-right: 1px;
  display: grid;
  grid-template-columns: repeat(5, 55.5px);
  justify-items: center;
  align-items: center;
}

.page {
  height: 1095px;
  background-color: #fff;
  border-radius: 12px 12px 0 0;
}

.toolbar {
  height: 51px;
  display: flex;
  align-items: center;
}

.tb-btn {
  width: 56px;
  flex: none;
  display: flex;
  justify-content: center;
}

.tb-btn:first-child {
  margin-left: 1px;
}

.url-ic {
  width: 30px;
  height: 30px;
  margin-left: 7px;
  border-radius: 8px;
  background-color: #ececec;
  display: flex;
  align-items: center;
  justify-content: center;
}

.url {
  margin-left: 11px;
  font-family: "Noto Sans", sans-serif;
  font-size: 18.8px;
  color: #222;
  white-space: nowrap;
}

.tb-right {
  margin-left: auto;
  display: flex;
  align-items: center;
  padding-right: 22px;
}

.tb-mark {
  margin-left: 22px;
}

.tb-sep {
  width: 1px;
  height: 26px;
  margin-left: 23px;
  background-color: #e8e8e8;
}

.tb-batt {
  margin-left: 24px;
}

.tb-card {
  margin-left: 28px;
}

.tb-down {
  margin-left: 36px;
}

.bookmarks {
  height: 29px;
  padding-bottom: 1px;
  display: flex;
  align-items: center;
  gap: 16px;
  border-bottom: 1px solid #e6e6e6;
  font-family: "Noto Sans", sans-serif;
  font-size: 15px;
  color: #222;
}

.bm {
  display: flex;
  align-items: center;
  gap: 6px;
  white-space: nowrap;
}

.bm.first {
  margin-left: 24px;
}

.bm.gb {
  margin-left: 8px;
}

.bm.stepic {
  margin-left: -3px;
}

.bm.pixel {
  margin-left: 7px;
}

.bm.wide {
  margin-left: 14px;
}

.bm.repo {
  margin-left: 17px;
}

.bm.dom {
  margin-left: 11px;
}

.chev {
  width: 10px;
  height: 6px;
  margin-left: 5px;
  color: #222;
}

.clip {
  overflow: hidden;
  -webkit-mask-image: linear-gradient(90deg, #000 85%, transparent);
  mask-image: linear-gradient(90deg, #000 85%, transparent);
}

.w-gb {
  width: 133px;
}

.w-dom {
  width: 135px;
}

.w-tr {
  width: 135px;
}

/* jacoco report */
.content {
  padding: 8px 9px 0 10px;
  font-size: 16.67px;
  color: #000;
}

.breadcrumb {
  height: 27px;
  box-sizing: border-box;
  border: 1px solid #d6d3ce;
  padding: 0 6px 0 6px;
  display: flex;
  align-items: center;
  justify-content: space-between;
}

.crumb-left,
.crumb-right {
  display: flex;
  align-items: center;
}

.crumb-ic {
  width: 18px;
  height: 20px;
  margin-right: 3px;
}

.crumb-gears {
  margin-right: 2px;
}

a {
  color: #0000ee;
}

a.visited {
  color: #551a8b;
}

h1 {
  margin: 19px 0 20px;
  font-size: 30px;
  line-height: 35px;
  font-weight: bold;
}

.coverage {
  width: 1320px;
  table-layout: fixed;
  border-collapse: separate;
  border-spacing: 0;
}

.c-el { width: 260px; }
.c-bar { width: 168px; }
.c-cov { width: 68px; }
.c-bar2 { width: 163px; }
.c-cov2 { width: 71px; }
.c-m1 { width: 78px; }
.c-t1 { width: 53px; }
.c-m2 { width: 79px; }
.c-t2 { width: 61px; }
.c-m3 { width: 77px; }
.c-t3 { width: 85px; }
.c-m4 { width: 78px; }
.c-t4 { width: 79px; }

.coverage td {
  height: 26px;
  box-sizing: border-box;
  padding: 0 0 1px;
  white-space: nowrap;
  border-bottom: 1px solid #d6d3ce;
}

.coverage thead td {
  height: 24px;
  padding-top: 2px;
  padding-bottom: 0;
  background-color: #e0e0e0;
  border-bottom: 1px solid #b0b0b0;
  position: relative;
}

.coverage tfoot td {
  padding-bottom: 3px;
  border-bottom: 0;
}

.coverage .el {
  padding-left: 7px;
}

.coverage .pkg {
  padding-left: 10px;
}

.pkg-ic {
  width: 16px;
  height: 16px;
  margin-right: 4px;
  vertical-align: -3px;
}

.coverage .bar {
  padding-left: 7px;
  border-left: 1px solid #e4e4e4;
}

.coverage thead .bar,
.coverage thead .gl {
  border-left-color: #c8c8c8;
}

.coverage .gl {
  border-left: 1px solid #e4e4e4;
}

.coverage .ctr1,
.coverage .ctr2 {
  text-align: right;
  padding-right: 18px;
}

.bars {
  display: flex;
  height: 12px;
  margin-bottom: 2px;
}

.bars i {
  display: block;
  flex: none;
}

.bars .r {
  background: linear-gradient(180deg, #f00 0, #f00 8%, #ff8080 27%, #ffa0a0 42%, #ffa0a0 58%, #ff8080 73%, #f00 92%, #f00 100%);
}

.bars .g {
  background: linear-gradient(180deg, #0a0 0, #0a0 8%, #70cc70 27%, #a0e0a0 42%, #a0e0a0 58%, #70cc70 73%, #0a0 92%, #0a0 100%);
}

/* sort arrows sit over the header cell */
.sort::before,
.sort::after {
  content: "";
  position: absolute;
  right: 7px;
  width: 0;
  height: 0;
  border-left: 4.5px solid transparent;
  border-right: 4.5px solid transparent;
}

.sort::before {
  top: 5px;
  border-bottom: 5.5px solid #bcbcbc;
}

.sort::after {
  top: 12px;
  border-top: 5.5px solid #bcbcbc;
}

.sort.down::after {
  border-top-color: #4a3a30;
}

.footer {
  margin-top: 25px;
  border-top: 1px solid #d6d3ce;
  padding: 1px 1px 0 0;
  text-align: right;
  color: #a0a0a0;
  font-size: 13px;
  font-weight: bold;
}

.footer a {
  color: #a0a0a0;
}

/* taskbar */
.taskbar {
  height: 60px;
  box-sizing: border-box;
  border-top: 1px solid #333;
  background-color: #1c1c1c;
  display: flex;
  align-items: center;
  font-family: "Noto Sans", sans-serif;
  color: #fff;
}

.weather {
  width: 300px;
  flex: none;
  box-sizing: border-box;
  padding-left: 26px;
  display: flex;
  align-items: center;
  gap: 8px;
}

.weather-text {
  margin-top: -3px;
}

.temp {
  font-size: 14px;
  line-height: 20px;
}

.cond {
  font-size: 14.4px;
  line-height: 20px;
  color: #ccc;
}

.winlogo {
  flex: none;
}

.search {
  width: 273px;
  height: 38px;
  margin-left: 17px;
  flex: none;
  box-sizing: border-box;
  padding-left: 14px;
  border-radius: 19px;
  background-color: #f2f2f2;
  display: flex;
  align-items: center;
  gap: 13px;
  color: #666;
  font-size: 16px;
}

.apps {
  display: flex;
  margin-left: 3.5px;
  flex: none;
}

.app {
  width: 55px;
  height: 59px;
  display: flex;
  align-items: center;
  justify-content: center;
  position: relative;
}

.app.on::after {
  content: "";
  position: absolute;
  left: 25.5px;
  bottom: 5px;
  width: 4px;
  height: 4px;
  border-radius: 50%;
  background-color: #888;
}

.app.current::before {
  content: "";
  position: absolute;
  left: 3px;
  top: 5px;
  width: 49px;
  height: 49px;
  border-radius: 6px;
  background-color: #2c2c2c;
}

.app.current svg {
  position: relative;
}

.app.current::after {
  content: "";
  position: absolute;
  left: 18px;
  bottom: 5px;
  width: 19px;
  height: 4px;
  border-radius: 2px;
  background-color: #a0cfe6;
}

.tray {
  display: flex;
  align-items: center;
  flex: 1;
  margin-left: 13px;
}

.tray-ic {
  width: 40px;
  display: flex;
  justify-content: center;
}

.tray-lang {
  width: 63px;
  font-size: 14px;
  text-align: center;
}

.tray-sm {
  width: 29.5px;
  display: flex;
  justify-content: center;
}

.clock {
  width: 87px;
  text-align: right;
  font-size: 14px;
  line-height: 20px;
}

.badge {
  width: 20px;
  height: 20px;
  margin-left: 14px;
  border-radius: 50%;
  background-color: #9cc8dc;
  color: #333;
  font-size: 13px;
  line-height: 20px;
  text-align: center;
}
```
